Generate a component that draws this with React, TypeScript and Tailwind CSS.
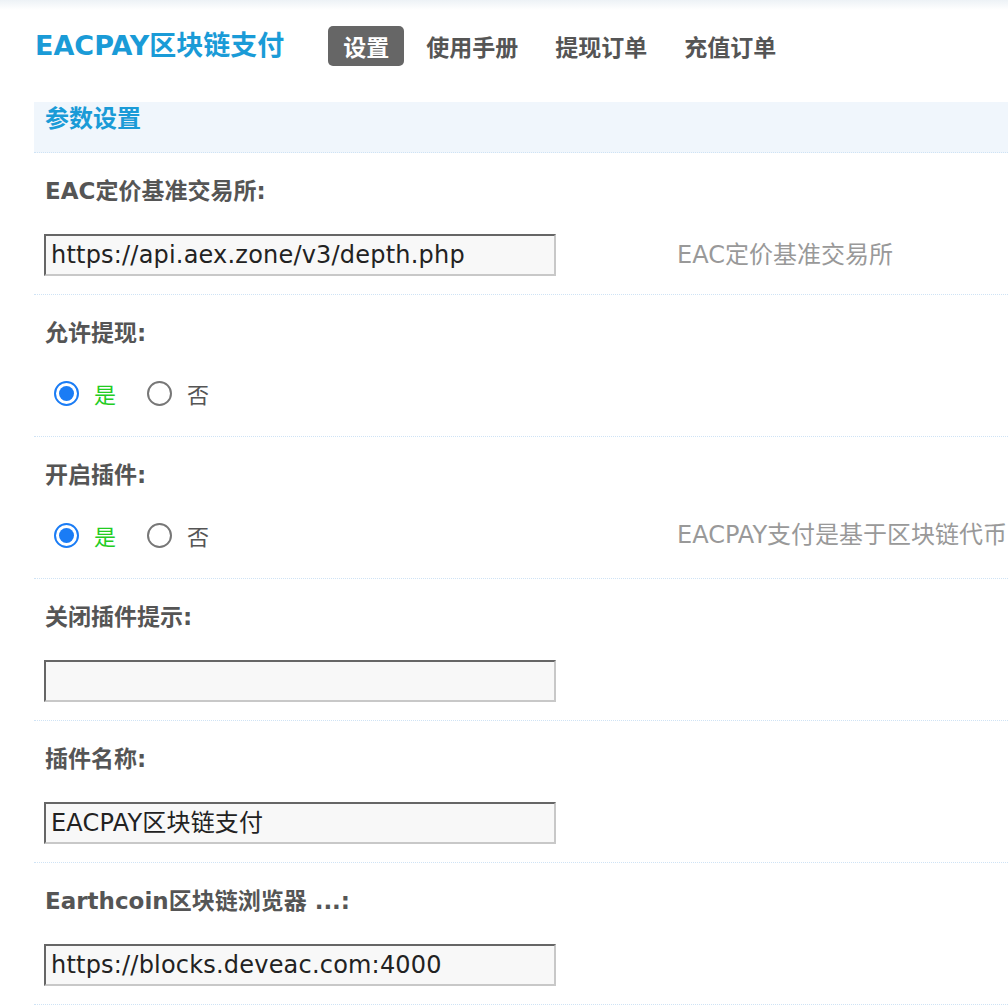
import React from 'react';

const cjk = "font-['DejaVu_Sans','Noto_Sans_CJK_SC',sans-serif]";

function TextInput({ value }: { value: string }) {
  return (
    <div className="w-[512px] h-[42px] bg-[#f8f8f8] border-2 border-t-[#666] border-l-[#666] border-b-[#c8c8c8] border-r-[#c8c8c8] flex items-center pl-[5px] text-[24px] tracking-[0.2px] text-[#222] font-['DejaVu_Sans','Noto_Sans_CJK_SC',sans-serif] leading-none">
      {value}
    </div>
  );
}

function Radio({ checked }: { checked?: boolean }) {
  if (checked) {
    return (
      <span className="block shrink-0 w-[25px] h-[25px] rounded-full border-2 border-[#1a7cf5] bg-white p-[3px]">
        <span className="block w-full h-full rounded-full bg-[#1a7cf5]" />
      </span>
    );
  }
  return <span className="block shrink-0 w-[25px] h-[25px] rounded-full border-2 border-[#777] bg-white" />;
}

function YesNo() {
  return (
    <div className="flex items-center h-[42px] pl-[10px] text-[22px] font-['Noto_Sans_CJK_SC',sans-serif]">
      <Radio checked />
      <span className="ml-[15px] text-[#22cc22]">是</span>
      <span className="ml-[31px]">
        <Radio />
      </span>
      <span className="ml-[15px] text-[#555]">否</span>
    </div>
  );
}

interface RowProps {
  label: string;
  children: React.ReactNode;
  hint?: string;
  radio?: boolean;
}

function Row({ label, children, hint, radio }: RowProps) {
  return (
    <div className={`border-b border-dotted border-[#cfe3f5] pt-[23px] ${radio ? 'pb-[22px]' : 'pb-[18px]'}`}>
      <div className={`pl-[11px] h-[30px] leading-[30px] text-[23px] font-bold text-[#555] ${cjk}`}>{label}</div>
      <div className={`flex items-center ${radio ? 'mt-[24px]' : 'mt-[28px]'}`}>
        <div className="w-[630px] pl-[10px]">{children}</div>
        {hint && (
          <div className={`pl-[13px] text-[24px] text-[#999] whitespace-nowrap ${cjk}`}>{hint}</div>
        )}
      </div>
    </div>
  );
}

export default function App() {
  return (
    <div className="w-[1008px] h-[1008px] overflow-hidden bg-white">
      <div className="h-[10px] bg-gradient-to-b from-[#edf2f6] to-white" />
      <div className="flex items-center h-[72px] pl-[35px]">
        <h1 className={`text-[27px] font-bold text-[#1a9bd7] ${cjk}`}>EACPAY区块链支付</h1>
        <nav className="flex items-center gap-[7px] ml-[44px] text-[23px] font-bold text-[#555] font-['Noto_Sans_CJK_SC',sans-serif]">
          <span className="bg-[#666] text-white rounded-[5px] px-[15px] h-[40px] leading-[40px]">设置</span>
          <span className="px-[15px]">使用手册</span>
          <span className="px-[15px]">提现订单</span>
          <span className="px-[15px]">充值订单</span>
        </nav>
      </div>
      <div className="ml-[34px] mt-[20px] w-[974px]">
        <div className="h-[51px] bg-[#f0f6fc] border-b border-dotted border-[#cfe3f5] pl-[11px]">
          <span className="block leading-[30px] text-[24px] font-bold text-[#1a9bd7] font-['Noto_Sans_CJK_SC',sans-serif]">参数设置</span>
        </div>
        <Row label="EAC定价基准交易所:" hint="EAC定价基准交易所">
          <TextInput value="https://api.aex.zone/v3/depth.php" />
        </Row>
        <Row label="允许提现:" radio>
          <YesNo />
        </Row>
        <Row label="开启插件:" hint="EACPAY支付是基于区块链代币" radio>
          <YesNo />
        </Row>
        <Row label="关闭插件提示:">
          <TextInput value="" />
        </Row>
        <Row label="插件名称:">
          <TextInput value="EACPAY区块链支付" />
        </Row>
        <Row label="Earthcoin区块链浏览器 ...:">
          <TextInput value="https://blocks.deveac.com:4000" />
        </Row>
      </div>
    </div>
  );
}
